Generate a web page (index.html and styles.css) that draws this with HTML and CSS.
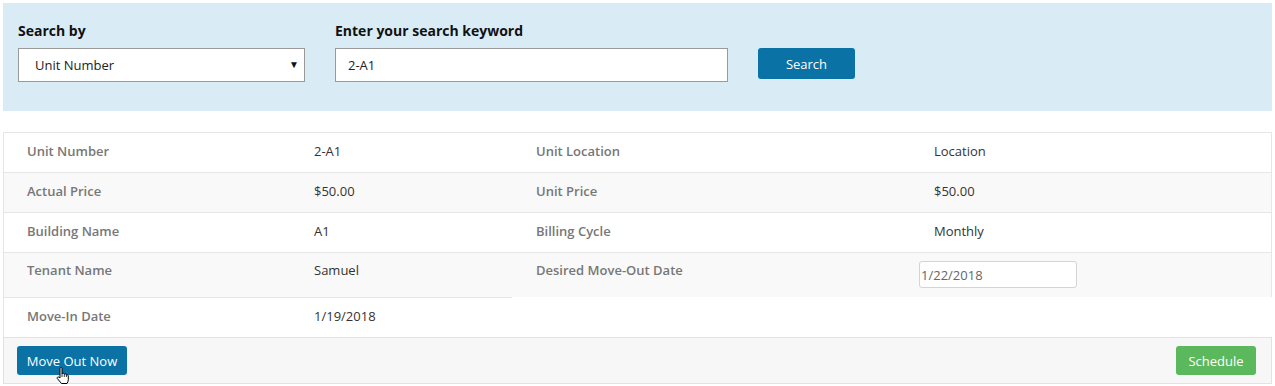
FILE: index.html
```html
<!DOCTYPE html>
<html lang="en">
<head>
    <meta charset="UTF-8">
    <title>Move Out</title>
    <link rel="stylesheet" href="styles.css">
</head>
<body>
    <div class="search-panel">
        <div class="field field-by">
            <label>Search by</label>
            <div class="select-wrap">
                <select class="select">
                    <option>Unit Number</option>
                </select>
                <span class="select-arrow">&#9660;</span>
            </div>
        </div>
        <div class="field field-key">
            <label>Enter your search keyword</label>
            <input class="text-input" type="text" value="2-A1">
        </div>
        <button class="btn btn-blue btn-search">Search</button>
    </div>

    <div class="details">
        <div class="cell label first">Unit Number</div>
        <div class="cell value">2-A1</div>
        <div class="cell label">Unit Location</div>
        <div class="cell value last">Location</div>

        <div class="cell label first alt">Actual Price</div>
        <div class="cell value alt">$50.00</div>
        <div class="cell label alt">Unit Price</div>
        <div class="cell value last alt">$50.00</div>

        <div class="cell label first">Building Name</div>
        <div class="cell value">A1</div>
        <div class="cell label">Billing Cycle</div>
        <div class="cell value last">Monthly</div>

        <div class="cell label first alt tall">Tenant Name</div>
        <div class="cell value alt tall">Samuel</div>
        <div class="cell label alt tall">Desired Move-Out Date</div>
        <div class="cell input-cell last alt">
            <input class="date-input" type="text" value="1/22/2018">
        </div>

        <div class="cell label first">Move-In Date</div>
        <div class="cell value">1/19/2018</div>
    </div>

    <div class="footer">
        <button class="btn btn-blue btn-move">Move Out Now</button>
        <button class="btn btn-green btn-schedule">Schedule</button>
        <!-- mouse pointer captured in the shot -->
        <svg class="pointer" width="14" height="18" viewBox="0 0 14 18">
            <path d="M4 1.5 Q4 0.5 5 0.5 Q6 0.5 6 1.5 V7 Q6.5 6 7.5 6.3 Q8.3 6.5 8.3 7.3 Q9 6.6 9.8 7 Q10.4 7.3 10.4 8 Q11 7.5 11.7 7.9 Q12.3 8.3 12.3 9 V12.5 Q12.3 14.5 11 16.5 H5.5 L1.3 11.5 Q0.8 10.5 1.8 10 Q2.8 9.6 4 11 Z" fill="#fff" stroke="#000" stroke-width="1"/>
            <path d="M6 7 V10 M8.3 7.3 V10 M10.4 8 V10" stroke="#000" stroke-width="0.8" fill="none"/>
        </svg>
    </div>
</body>
</html>
```

FILE: styles.css
```css
body {
    margin: 3px;
    font-family: "Open Sans", "Liberation Sans", sans-serif;
    font-size: 13px;
    color: #333;
    background: #fff;
}

/* search area */
.search-panel {
    background: #d9ecf5;
    display: flex;
    align-items: flex-start;
    padding: 18px 15px 29px;
}

.field label {
    display: block;
    font-size: 14px;
    font-weight: 700;
    color: #111;
    line-height: 20px;
    margin-bottom: 7px;
}

.field-by {
    width: 287px;
}

.field-key {
    width: 393px;
    margin-left: 30px;
}

.select-wrap {
    position: relative;
}

.select {
    appearance: none;
    -webkit-appearance: none;
    width: 100%;
    height: 34px;
    border: 1px solid #9a9a9a;
    border-radius: 0;
    background: #fff;
    padding: 0 16px;
    font-family: inherit;
    font-size: 13px;
    color: #222;
}

.select-arrow {
    position: absolute;
    right: 6px;
    top: 9px;
    font-size: 10px;
    color: #111;
    pointer-events: none;
}

.text-input {
    box-sizing: border-box;
    width: 100%;
    height: 34px;
    border: 1px solid #9a9a9a;
    padding: 0 12px;
    font-family: inherit;
    font-size: 13px;
    color: #222;
    outline: none;
}

.btn {
    border: none;
    border-radius: 3px;
    color: #fff;
    font-family: inherit;
    font-size: 13px;
    height: 29px;
    padding: 0 9px;
}

.btn-blue {
    background: #0a72a5;
}

.btn-green {
    background: #5cb85c;
}

.btn-search {
    width: 97px;
    height: 31px;
    margin-left: 30px;
    margin-top: 27px;
}

/* details table */
.details {
    margin-top: 21px;
    display: grid;
    grid-template-columns: 287px 222px 398px 1fr;
}

.cell {
    box-sizing: border-box;
    border-top: 1px solid #e6e6e6;
    padding: 0 24px 4px;
    line-height: 18px;
    display: flex;
    align-items: center;
    min-height: 40px;
    background: #fff;
}

.cell.alt {
    background: #f9f9f9;
}

.cell.tall {
    align-items: flex-start;
    padding-top: 8px;
}

.cell.first {
    border-left: 1px solid #e6e6e6;
    padding-left: 23px;
}

.cell.last {
    border-right: 1px solid #e6e6e6;
}

.label {
    color: #777;
    font-weight: 600;
}

.value {
    color: #333;
}

.cell.input-cell {
    padding: 8px 9px 9px;
}

.date-input {
    box-sizing: border-box;
    width: 158px;
    height: 27px;
    border: 1px solid #d4d4d4;
    border-radius: 3px;
    padding: 0 1px;
    font-family: inherit;
    font-size: 13px;
    color: #666;
    background: #fff;
}

.footer {
    position: relative;
    border: 1px solid #e2e2e2;
    background: #f7f7f7;
    display: flex;
    justify-content: space-between;
    padding: 8px 15px 8px 13px;
}

.btn-move {
    width: 110px;
}

.btn-schedule {
    width: 80px;
}

.pointer {
    position: absolute;
    left: 52px;
    top: 29px;
}
```
